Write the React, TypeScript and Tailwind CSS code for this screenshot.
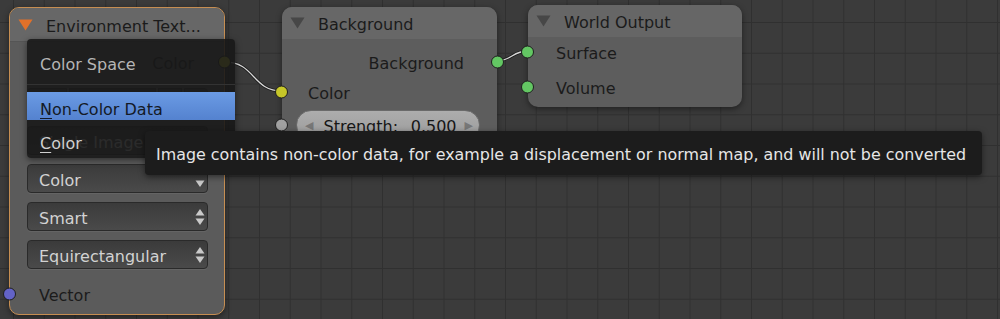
import React from "react";

type SocketProps = { color: string; className?: string };

const Socket = ({ color, className = "" }: SocketProps) => (
  <span
    className={`absolute top-1/2 h-[13px] w-[13px] -translate-y-1/2 rounded-full border border-[#1e1e1e] ${color} ${className}`}
  />
);

const Tri = ({ className }: { className: string }) => (
  <svg width="15" height="12" viewBox="0 0 15 12" className="shrink-0">
    <path d="M0.5 0.5 L14.5 0.5 L7.5 11.5 Z" className={className} />
  </svg>
);

const UpDown = ({ up = true }: { up?: boolean }) => (
  <svg width="10" height="18" viewBox="0 0 10 18" className="shrink-0">
    {up && <path d="M5 1 L9.5 7.5 L0.5 7.5 Z" fill="#c9c9c9" />}
    <path d="M5 17 L9.5 10.5 L0.5 10.5 Z" fill="#c9c9c9" />
  </svg>
);

const Select = ({ label, up = true }: { label: string; up?: boolean }) => (
  <div className="flex h-[29px] items-center justify-between rounded-[4px] border border-[#2a2a2a] bg-[linear-gradient(to_bottom,#3b3b3b,#4a4a4a)] pl-[11px] pr-[2px] text-[#d2d2d2] shadow-[0_1px_0_rgba(255,255,255,0.06)]">
    <span className="relative top-[2px]">{label}</span>
    <UpDown up={up} />
  </div>
);

const App = () => {
  return (
    <div className="relative h-[319px] w-[1000px] overflow-hidden bg-[#3b3b3b] bg-[linear-gradient(to_right,#303030_1px,transparent_1px),linear-gradient(to_bottom,#303030_1px,transparent_1px)] bg-[size:30.75px_30.75px] bg-[position:13px_22px] font-['DejaVu_Sans',sans-serif] text-[16px] leading-none">
      {/* WIRES */}
      <svg className="pointer-events-none absolute inset-0" width="1000" height="319">
        <path d="M225 62 C255 62, 252 91, 282 91" fill="none" stroke="#1c1c1c" strokeWidth="3" />
        <path d="M225 62 C255 62, 252 91, 282 91" fill="none" stroke="#d8d8d8" strokeWidth="1.3" />
        <path d="M496 61 C512 61, 512 51, 528 51" fill="none" stroke="#1c1c1c" strokeWidth="3" />
        <path d="M496 61 C512 61, 512 51, 528 51" fill="none" stroke="#d8d8d8" strokeWidth="1.3" />
      </svg>

      {/* ENVIRONMENT TEXTURE NODE */}
      <div className="absolute left-[9px] top-[7px] flex h-[308px] w-[216px] flex-col rounded-[10px] border border-[#c68e52] bg-[#5b5b5b] shadow-[0_2px_6px_rgba(0,0,0,0.45)]">
        <div className="flex h-[34px] shrink-0 items-center gap-[13px] rounded-t-[9px] border-b border-[#555] bg-[#676767] pl-[8px] text-[#1b1b1b]">
          <Tri className="fill-[#e2712a]" />
          <span className="relative top-[2px]">Environment Text...</span>
        </div>
        <div className="relative flex h-[40px] shrink-0 items-center justify-end pr-[30px] text-[#1b1b1b]">
          <span className="relative top-[2px]">Color</span>
          <Socket color="bg-[#c7c729]" className="-right-[7px]" />
        </div>
        <div className="ml-[17px] mr-[16px] mt-[6px] flex flex-col gap-[9px]">
          <div className="flex h-[29px] gap-[2px]">
            <div className="w-[40px] rounded-l-[4px] border border-[#2a2a2a] bg-[#444]" />
            <div className="flex-1 border border-[#2a2a2a] bg-[#3a3a3a]" />
            <div className="w-[24px] border border-[#2a2a2a] bg-[#444]" />
            <div className="w-[24px] rounded-r-[4px] border border-[#2a2a2a] bg-[#444]" />
          </div>
          <Select label="Single Image" />
          <Select label="Color" up={false} />
          <Select label="Smart" />
          <Select label="Equirectangular" />
        </div>
        <div className="relative flex flex-1 items-center pl-[29px] pt-[4px] text-[#1b1b1b]">
          <span className="relative top-[2px]">Vector</span>
          <Socket color="bg-[#6363c7]" className="-left-[7px] mt-[2px]" />
        </div>
      </div>

      {/* BACKGROUND NODE */}
      <div className="absolute left-[282px] top-[7px] flex h-[146px] w-[215px] flex-col rounded-[10px] bg-[#5d5d5d] shadow-[0_2px_6px_rgba(0,0,0,0.45)]">
        <div className="flex h-[32px] items-center gap-[13px] rounded-t-[10px] bg-[#676767] pl-[8px] text-[#1b1b1b]">
          <Tri className="fill-[#474747]" />
          <span className="relative top-[2px]">Background</span>
        </div>
        <div className="relative mt-[8px] flex h-[30px] items-center justify-end pr-[33px] text-[#1b1b1b]">
          <span className="relative top-[2px]">Background</span>
          <Socket color="bg-[#63c763]" className="-right-[7px]" />
        </div>
        <div className="relative flex h-[30px] items-center pl-[26px] text-[#1b1b1b]">
          <span className="relative top-[2px]">Color</span>
          <Socket color="bg-[#c7c729]" className="-left-[7px]" />
        </div>
        <div className="relative mt-[3px] flex h-[30px] items-center">
          <Socket color="bg-[#a1a1a1]" className="-left-[7px]" />
          <div className="ml-[14px] flex h-[30px] w-[184px] items-center rounded-full border border-[#6a6a6a] bg-[linear-gradient(to_bottom,#adadad,#9b9b9b)] pl-[8px] pr-[6px] text-[#161616]">
            <span className="text-[11px] text-[#777]">◀</span>
            <span className="relative top-[2px] ml-[10px]">Strength:</span>
            <span className="relative top-[2px] ml-auto mr-[8px]">0.500</span>
            <span className="text-[11px] text-[#777]">▶</span>
          </div>
        </div>
      </div>

      {/* WORLD OUTPUT NODE */}
      <div className="absolute left-[528px] top-[5px] flex h-[102px] w-[214px] flex-col rounded-[10px] bg-[#5d5d5d] shadow-[0_2px_6px_rgba(0,0,0,0.45)]">
        <div className="flex h-[32px] items-center gap-[13px] rounded-t-[10px] bg-[#666] pl-[8px] text-[#1b1b1b]">
          <Tri className="fill-[#474747]" />
          <span className="relative top-[2px]">World Output</span>
        </div>
        <div className="relative flex h-[30px] items-center pl-[28px] text-[#1b1b1b]">
          <span className="relative top-[2px]">Surface</span>
          <Socket color="bg-[#63c763]" className="-left-[7px]" />
        </div>
        <div className="relative mt-[5px] flex h-[30px] items-center pl-[28px] text-[#1b1b1b]">
          <span className="relative top-[2px]">Volume</span>
          <Socket color="bg-[#63c763]" className="-left-[7px]" />
        </div>
      </div>

      {/* COLOR SPACE MENU */}
      <div className="absolute left-[27px] top-[39px] flex h-[119px] w-[208px] flex-col rounded-[4px] bg-[rgba(24,24,24,0.9)] shadow-[0_2px_6px_rgba(0,0,0,0.5)]">
        <div className="flex h-[46px] items-center border-b border-[#333] pl-[13px] text-[#b5b5b5]">
          <span className="relative top-[3px]">Color Space</span>
        </div>
        <div className="mt-[7px] flex h-[28px] items-center bg-[linear-gradient(to_bottom,#6b9be4,#5482cf)] pl-[13px] text-[#141a26]">
          <span className="relative top-[4px]">
            <span className="underline decoration-[1px] underline-offset-[3px]">N</span>on-Color Data
          </span>
        </div>
        <div className="flex h-[37px] items-center pl-[13px] text-[#d0d0d0]">
          <span className="relative top-[5px]">
            <span className="underline decoration-[1px] underline-offset-[3px]">C</span>olor
          </span>
        </div>
      </div>

      {/* TOOLTIP */}
      <div className="absolute left-[145px] top-[131px] flex h-[44px] w-[837px] items-center rounded-[4px] bg-[#1c1c1c] pl-[11px] text-[15.9px] text-[#e6e6e6] shadow-[0_2px_6px_rgba(0,0,0,0.5)]">
        <span className="relative top-[2px]">
          Image contains non-color data, for example a displacement or normal map, and will not be converted
        </span>
      </div>
    </div>
  );
};

export default App;
